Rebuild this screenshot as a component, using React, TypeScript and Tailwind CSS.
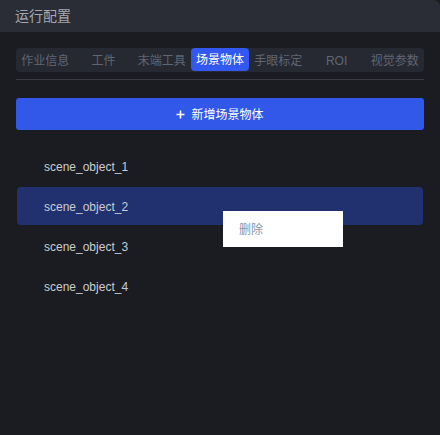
import React from "react";

const tabs = ["作业信息", "工件", "末端工具", "场景物体", "手眼标定", "ROI", "视觉参数"];
const items = ["scene_object_1", "scene_object_2", "scene_object_3", "scene_object_4"];

export default function App() {
  return (
    <div
      className="relative flex h-[435px] w-[440px] flex-col overflow-hidden bg-[#1b1c21]"
      style={{ fontFamily: '"Liberation Sans", "Noto Sans CJK SC", sans-serif' }}
    >
      <div className="flex h-8 items-center rounded-tr-[6px] bg-[#2a2d36] px-[15px] text-[14px] text-[#a3a8b3]">
        运行配置
      </div>
      <div className="flex flex-col px-4 pt-4">
        <div className="grid h-6 grid-cols-7 rounded-[4px] bg-[#262932]">
          {tabs.map((t, i) =>
            i === 3 ? (
              <div
                key={t}
                className="flex h-[23px] items-center justify-center rounded-[4px] bg-[#3358f0] pt-px text-[12px] text-white"
              >
                {t}
              </div>
            ) : (
              <div key={t} className="flex items-center justify-center pt-px text-[12px] text-[#5f6675]">
                {t}
              </div>
            )
          )}
        </div>
        <div className="mt-[7px] h-px bg-[#3a3d45]" />
        <button className="mt-[18px] flex h-8 items-center justify-center gap-[6px] rounded-[3px] bg-[#3158e8] pt-px text-[12px] text-white">
          <svg width="9" height="9" viewBox="0 0 9 9">
            <path d="M4.5 0.5v8M0.5 4.5h8" stroke="white" strokeWidth="1.6" />
          </svg>
          新增场景物体
        </button>
        <div className="mt-[17px] flex flex-col gap-[2px]">
          {items.map((t, i) => (
            <div
              key={t}
              className={
                "mx-px flex h-[38px] items-center pl-[27px] pt-[2px] text-[12px] text-[#c9ccd3] " +
                (i === 1 ? "rounded-[4px] bg-[#213170]" : "")
              }
            >
              {t}
            </div>
          ))}
        </div>
      </div>
      <div className="absolute left-[223px] top-[211px] flex h-9 w-[120px] items-center bg-white pl-4 pt-px text-[12px] text-[#8a93a6]">
        删除
      </div>
    </div>
  );
}
